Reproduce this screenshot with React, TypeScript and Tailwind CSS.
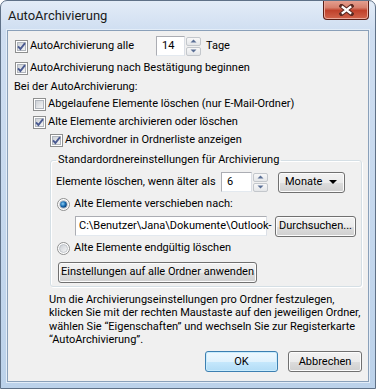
import React from 'react';

const font = { fontFamily: 'Roboto, "Noto Sans", sans-serif' };

function Checkbox({ checked }: { checked?: boolean }) {
  return (
    <svg width="13" height="13" viewBox="0 0 13 13" className="shrink-0">
      <defs>
        <linearGradient id="cbInner" x1="0" y1="0" x2="1" y2="1">
          <stop offset="0" stopColor="#cbcfd5" />
          <stop offset="1" stopColor="#f6f6f6" />
        </linearGradient>
      </defs>
      <rect x="0.5" y="0.5" width="12" height="12" fill="#fff" stroke="#8e8f8f" />
      <rect x="2.5" y="2.5" width="8" height="8" fill="url(#cbInner)" stroke="#b0b5bc" />
      {checked && (
        <path d="M3 6.3 L5.4 9 L10 3.2" fill="none" stroke="#4b5b92" strokeWidth="1.9" />
      )}
    </svg>
  );
}

function Radio({ checked }: { checked?: boolean }) {
  return (
    <svg width="13" height="13" viewBox="0 0 13 13" className="shrink-0">
      <defs>
        <linearGradient id="rdInner" x1="0" y1="0" x2="1" y2="1">
          <stop offset="0" stopColor="#c9cdd3" />
          <stop offset="1" stopColor="#f7f7f7" />
        </linearGradient>
        <radialGradient id="rdDot" cx="0.4" cy="0.4" r="0.6">
          <stop offset="0" stopColor="#8fd0f5" />
          <stop offset="0.6" stopColor="#1a6fb5" />
          <stop offset="1" stopColor="#0c3f78" />
        </radialGradient>
      </defs>
      <circle cx="6.5" cy="6.5" r="6" fill="#fff" stroke="#8e8f8f" />
      <circle cx="6.5" cy="6.5" r="4" fill="url(#rdInner)" stroke="#b6bbc2" strokeWidth="0.8" />
      {checked && <circle cx="6.5" cy="6.5" r="3.3" fill="url(#rdDot)" />}
    </svg>
  );
}

function Arrow({ up }: { up?: boolean }) {
  return (
    <svg width="7" height="4" viewBox="0 0 7 4">
      <path d={up ? 'M0.5 3.5 L3.5 0.5 L6.5 3.5 Z' : 'M0.5 0.5 L3.5 3.5 L6.5 0.5 Z'} fill="#5a6f95" />
    </svg>
  );
}

function Spin({ value, width }: { value: string; width: string }) {
  return (
    <div className="flex items-center shrink-0">
      <div className={`${width} h-[20px] bg-white border border-[#abadb3] border-b-[#e3e9ef] border-r-[#dbdfe6] flex items-center pl-[5px]`}>
        {value}
      </div>
      <div className="ml-[1px] flex flex-col gap-[1px]">
        <div className="w-[15px] h-[9px] rounded-[2px] border border-[#c3c7cc] bg-gradient-to-b from-[#f8f8f8] to-[#e4e6e9] flex items-center justify-center">
          <Arrow up />
        </div>
        <div className="w-[15px] h-[9px] rounded-[2px] border border-[#c3c7cc] bg-gradient-to-b from-[#f8f8f8] to-[#e4e6e9] flex items-center justify-center">
          <Arrow />
        </div>
      </div>
    </div>
  );
}

function Button({
  children,
  className = '',
  primary,
  between,
}: {
  children: React.ReactNode;
  className?: string;
  primary?: boolean;
  between?: boolean;
}) {
  const skin = primary
    ? 'border-[#3c7fb1] bg-[linear-gradient(#eef8fe_0%,#e0f2fd_50%,#c6e8fc_51%,#b2dcf6_100%)] shadow-[inset_0_0_0_1px_#c9ecfd]'
    : 'border-[#707070] bg-[linear-gradient(#f2f2f2_0%,#ebebeb_50%,#dddddd_51%,#cfcfcf_100%)] shadow-[inset_0_0_0_1px_#fcfcfc]';
  return (
    <div
      className={`h-[21px] shrink-0 whitespace-nowrap rounded-[3px] border ${skin} flex items-center ${
        between ? 'justify-between' : 'justify-center'
      } ${className}`}
    >
      {children}
    </div>
  );
}

function CloseButton() {
  return (
    <div className="absolute top-[-1px] right-[6px] w-[46px] h-[20px] rounded-b-[4px] border border-[#5a1f17] border-t-0 bg-[linear-gradient(#e6a394_0%,#d7806d_40%,#c0412b_55%,#d1644c_100%)] shadow-[inset_0_0_0_1px_#eba99b] flex items-center justify-center">
      <svg width="15" height="12" viewBox="0 0 15 12">
        <path d="M2.5 2 L12.5 10 M12.5 2 L2.5 10" stroke="#5c2a22" strokeWidth="4.2" strokeLinecap="square" />
        <path d="M2.8 2.3 L12.2 9.7 M12.2 2.3 L2.8 9.7" stroke="#fff" strokeWidth="2.3" />
      </svg>
    </div>
  );
}

export default function App() {
  return (
    <div
      className="relative w-[376px] h-[389px] overflow-hidden rounded-t-[7px] border border-[#5f7187] bg-[linear-gradient(#e3ecf7_0px,#cfdef1_30px,#bcd2ea_100%)] text-[11px] text-black whitespace-nowrap"
      style={font}
    >
      <CloseButton />
      <div className="h-[29px] flex items-center pl-[7px] text-[13px] text-[#1a1a1a]">AutoArchivierung</div>

      <div className="mx-[6px] h-[352px] border border-[#8aa0b9] bg-[#f0f0f0] shadow-[0_0_0_1px_#e3edf8]">
        <div className="mt-[5px] h-[20px] flex items-center pl-[7px]">
          <Checkbox checked />
          <span className="ml-[2px] w-[126px]">AutoArchivierung alle</span>
          <Spin value="14" width="w-[29px]" />
          <span className="ml-[5px]">Tage</span>
        </div>

        <div className="mt-[2px] h-[21px] flex items-center pl-[7px]">
          <Checkbox checked />
          <span className="ml-[2px]">AutoArchivierung nach Bestätigung beginnen</span>
        </div>

        <div className="h-[17px] flex items-center pl-[6px]">Bei der AutoArchivierung:</div>

        <div className="h-[17px] flex items-center pl-[25px]">
          <Checkbox />
          <span className="ml-[2px]">Abgelaufene Elemente löschen (nur E-Mail-Ordner)</span>
        </div>

        <div className="h-[18px] flex items-center pl-[25px]">
          <Checkbox checked />
          <span className="ml-[2px]">Alte Elemente archivieren oder löschen</span>
        </div>

        <div className="h-[19px] flex items-center pl-[42px]">
          <Checkbox checked />
          <span className="ml-[2px]">Archivordner in Ordnerliste anzeigen</span>
        </div>

        <fieldset className="mt-[2px] ml-[42px] w-[312px] rounded-[3px] border border-[#d5dfe5] pl-[5px] pr-0 pt-0 pb-[4px] shadow-[inset_1px_1px_0_#fff,1px_1px_0_#fff]">
          <legend className="px-[2px] h-[16px] leading-[16px]">Standardordnereinstellungen für Archivierung</legend>

          <div className="mt-[4px] h-[20px] flex items-center">
            <span className="w-[165px]">Elemente löschen, wenn älter als</span>
            <Spin value="6" width="w-[31px]" />
            <Button between className="ml-[10px] w-[67px] pl-[6px] pr-[7px]">
              <span>Monate</span>
              <svg width="8" height="4" viewBox="0 0 8 4">
                <path d="M0 0 L8 0 L4 4 Z" fill="#000" />
              </svg>
            </Button>
          </div>

          <div className="h-[24px] flex items-center pl-[1px]">
            <Radio checked />
            <span className="ml-[4px]">Alte Elemente verschieben nach:</span>
          </div>

          <div className="h-[20px] flex items-center pl-[19px]">
            <div className="w-[192px] h-[20px] shrink-0 bg-white border border-[#abadb3] border-b-[#e3e9ef] border-r-[#dbdfe6] flex items-center pl-[3px]">
              C:\Benutzer\Jana\Dokumente\Outlook-
            </div>
            <Button className="ml-[8px] w-[81px]">Durchsuchen...</Button>
          </div>

          <div className="h-[24px] flex items-center pl-[1px]">
            <Radio />
            <span className="ml-[4px]">Alte Elemente endgültig löschen</span>
          </div>

          <div className="mt-[2px] h-[20px] flex items-center pl-[2px]">
            <Button className="w-[199px]">Einstellungen auf alle Ordner anwenden</Button>
          </div>
        </fieldset>

        <p className="mt-[6px] ml-[41px] leading-[13.33px]">
          Um die Archivierungseinstellungen pro Ordner festzulegen,
          <br />
          klicken Sie mit der rechten Maustaste auf den jeweiligen Ordner,
          <br />
          wählen Sie “Eigenschaften” und wechseln Sie zur Registerkarte
          <br />
          “AutoArchivierung”.
        </p>

        <div className="mt-[5px] flex justify-end gap-[10px] pr-[6px]">
          <Button primary className="w-[73px]">OK</Button>
          <Button className="w-[74px]">Abbrechen</Button>
        </div>
      </div>
    </div>
  );
}
